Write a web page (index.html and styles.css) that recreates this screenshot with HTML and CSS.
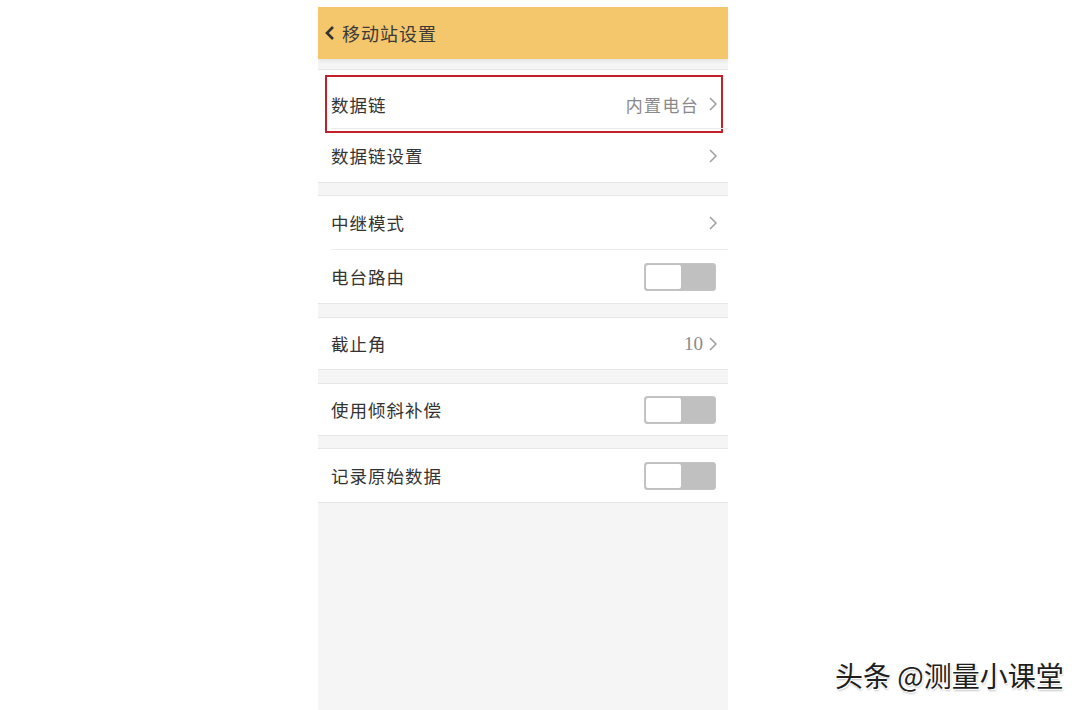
FILE: index.html
```html
<!DOCTYPE html>
<html lang="zh-CN">
  <head>
    <meta charset="UTF-8" />
    <meta name="viewport" content="width=device-width, initial-scale=1.0" />
    <title>移动站设置</title>
    <link rel="stylesheet" href="styles.css">
  </head>
  <body>
    <div class="phone">
      <div class="topbar">
        <svg class="back" width="12" height="16" viewBox="0 0 12 16">
          <path d="M9 2 L3 8 L9 14" fill="none" stroke="#333" stroke-width="2.6" />
        </svg>
        <span class="title">移动站设置</span>
      </div>

      <div class="group tall">
        <div class="row marked">
          <span class="label">数据链</span>
          <span class="value">内置电台</span>
          <svg class="chev" width="10" height="16" viewBox="0 0 10 16"><path d="M2 2 L8 8 L2 14" /></svg>
        </div>
        <div class="row">
          <span class="label">数据链设置</span>
          <svg class="chev" width="10" height="16" viewBox="0 0 10 16"><path d="M2 2 L8 8 L2 14" /></svg>
        </div>
      </div>

      <div class="group">
        <div class="row">
          <span class="label">中继模式</span>
          <svg class="chev" width="10" height="16" viewBox="0 0 10 16"><path d="M2 2 L8 8 L2 14" /></svg>
        </div>
        <div class="row">
          <span class="label">电台路由</span>
          <span class="switch"><span class="knob"></span></span>
        </div>
      </div>

      <div class="group single">
        <div class="row">
          <span class="label">截止角</span>
          <span class="value num">10</span>
          <svg class="chev" width="10" height="16" viewBox="0 0 10 16"><path d="M2 2 L8 8 L2 14" /></svg>
        </div>
      </div>

      <div class="group single">
        <div class="row">
          <span class="label">使用倾斜补偿</span>
          <span class="switch"><span class="knob"></span></span>
        </div>
      </div>

      <div class="group single">
        <div class="row">
          <span class="label">记录原始数据</span>
          <span class="switch"><span class="knob"></span></span>
        </div>
      </div>
    </div>

    <div class="watermark">头条 @测量小课堂</div>
  </body>
</html>
```

FILE: styles.css
```css
html,
body {
  margin: 0;
  padding: 0;
  background: #fff;
  height: 710px;
  overflow: hidden;
}
body {
  font-family: "Noto Sans CJK SC", "Liberation Sans", sans-serif;
  color: #333;
  padding-top: 7px;
  box-sizing: border-box;
}
.phone {
  margin-left: 318px;
  width: 410px;
  height: 703px;
  background: #f5f5f5;
  display: flex;
  flex-direction: column;
  gap: 13px;
}
.topbar {
  height: 52px;
  background: #f5c76c;
  display: flex;
  align-items: center;
  padding-left: 6px;
  gap: 6px;
  box-shadow: 0 2px 4px rgba(0, 0, 0, 0.08);
  margin-bottom: -3px;
}
.topbar .title {
  font-size: 18px;
  letter-spacing: 1px;
  color: #3a3a3a;
  margin-top: -1px;
}
.group {
  background: #fff;
  border-top: 1px solid #e6e6e6;
  border-bottom: 1px solid #e6e6e6;
}
.group.tall + .group,
.group.single:last-child {
  margin-top: -1px;
}
.row {
  height: 53px;
  display: flex;
  align-items: center;
  padding: 0 12px 0 13px;
  position: relative;
}
.row + .row {
  border-top: 1px solid #ececec;
  margin-left: 13px;
  padding-left: 0;
}
.group.tall .row:first-child {
  height: 48px;
  padding-top: 10px;
}
.group.single .row {
  height: 51px;
}
.group.single:last-child .row {
  height: 53px;
}
.label {
  font-size: 17.5px;
  color: #333;
  flex: 1;
  letter-spacing: 1px;
}
.value {
  font-size: 17px;
  color: #8a8a8a;
  letter-spacing: 1.3px;
  margin-right: 9px;
}
.value.num {
  font-family: "Liberation Serif", serif;
  font-size: 19px;
  letter-spacing: 0;
  margin-right: 5px;
}
.chev {
  margin-right: -2px;
}
.chev path {
  fill: none;
  stroke: #a0a0a0;
  stroke-width: 1.5;
}
.marked::after {
  content: "";
  position: absolute;
  left: 7px;
  right: 5px;
  top: 5px;
  bottom: -5px;
  border: 2px solid #c4202a;
  pointer-events: none;
}
.switch {
  width: 72px;
  height: 28px;
  border-radius: 3px;
  background: #c0c0c0;
  display: flex;
  padding: 1px;
  box-sizing: border-box;
  border: 1px solid #c4c4c4;
}
.switch .knob {
  width: 35px;
  height: 100%;
  background: #fff;
  border-radius: 2px;
}
.watermark {
  position: absolute;
  left: 835px;
  top: 655px;
  font-size: 28px;
  color: #1e1e1e;
  text-shadow: 1px 1px 0 #fff, -1px -1px 0 #fff, 1px 2px 2px rgba(0, 0, 0, 0.25);
}
```
